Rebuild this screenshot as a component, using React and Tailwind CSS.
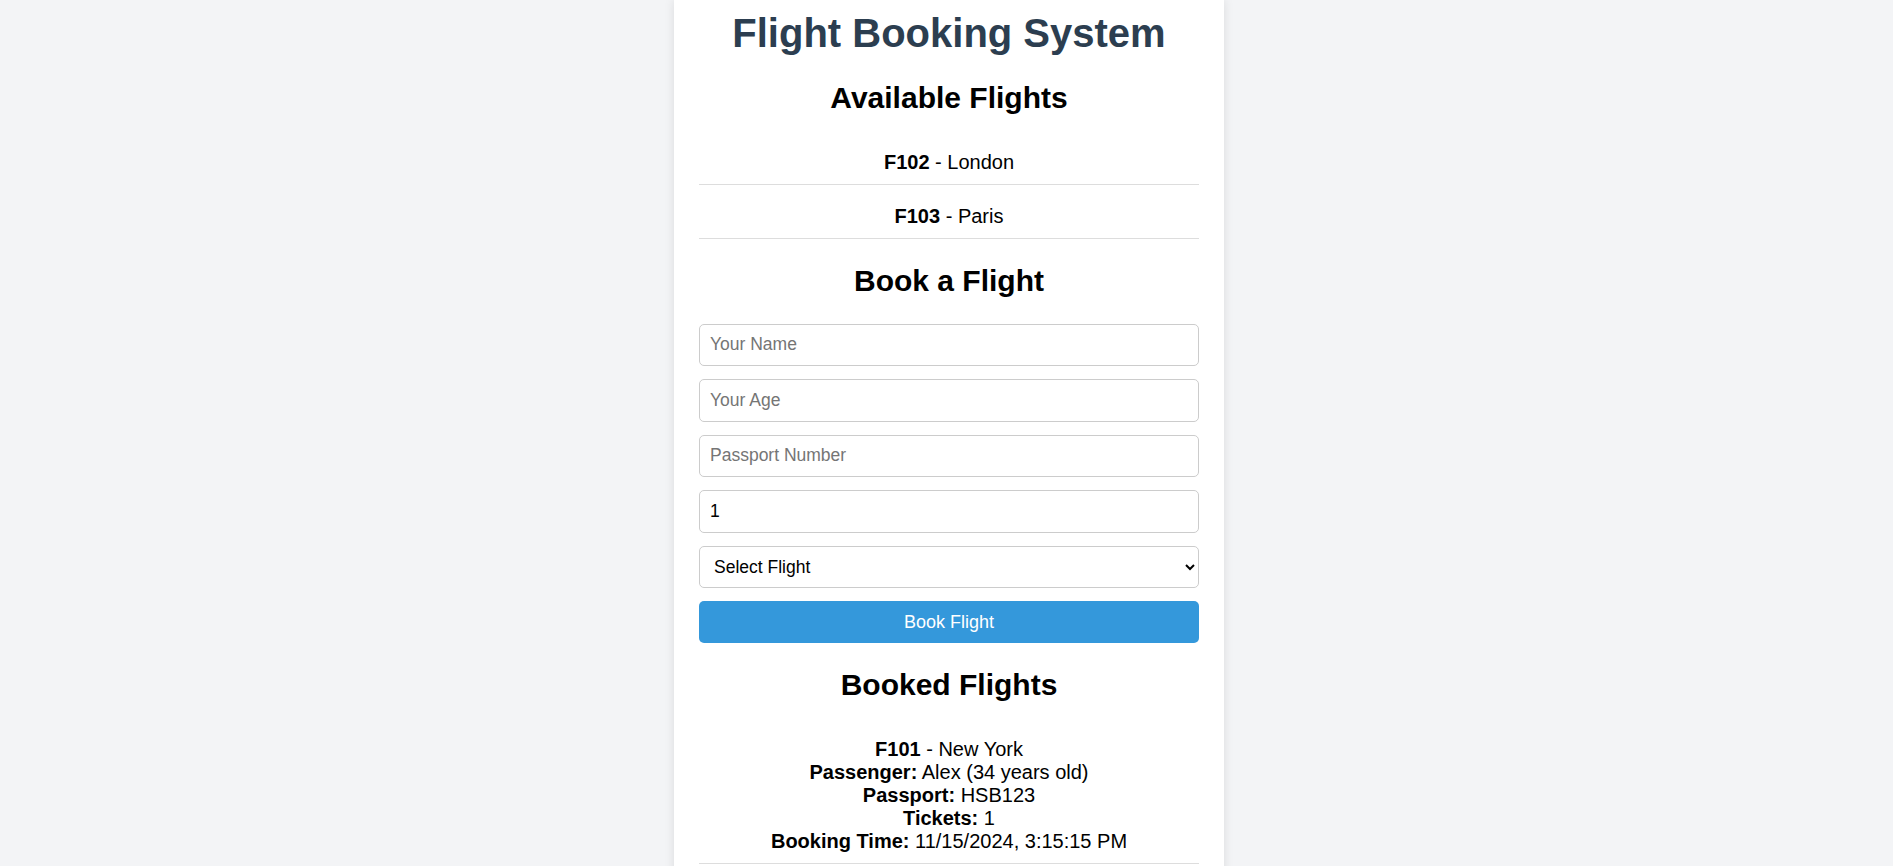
import React from "react";

const flights = [
  { id: "F102", dest: "London" },
  { id: "F103", dest: "Paris" },
];

export default function App() {
  const inputCls =
    "block w-full h-[42.5px] px-[10px] border border-[#ccc] rounded-[5px] bg-white text-[17.5px] text-black outline-none placeholder:text-[#757575]";
  return (
    <div className="min-h-screen bg-[#f3f4f6] pl-[5px] font-['Liberation_Sans',Arial,sans-serif] text-black">
      <div className="mx-auto w-[550px] bg-white px-[25px] pt-[10px] pb-[20px] shadow-[0_0_10px_rgba(0,0,0,0.1)]">
        <h1 className="text-center text-[40px] font-bold leading-[46px] text-[#2c3e50]">
          Flight Booking System
        </h1>
        <h2 className="mt-[25px] mb-[25px] text-center text-[30px] font-bold leading-[34.5px]">
          Available Flights
        </h2>
        <ul className="flex flex-col gap-[10px]">
          {flights.map((f) => (
            <li
              key={f.id}
              className="py-[10px] border-b border-[#ddd] text-center text-[20px] leading-[23px]"
            >
              <strong>{f.id}</strong> - {f.dest}
            </li>
          ))}
        </ul>
        <h2 className="mt-[25px] mb-[25.5px] text-center text-[30px] font-bold leading-[34.5px]">
          Book a Flight
        </h2>
        <form className="flex flex-col gap-[13px]" onSubmit={(e) => e.preventDefault()}>
          <input type="text" placeholder="Your Name" className={inputCls} />
          <input type="number" placeholder="Your Age" className={inputCls} />
          <input type="text" placeholder="Passport Number" className={inputCls} />
          <input type="number" defaultValue="1" className={inputCls} />
          <select className={inputCls} defaultValue="">
            <option value="">Select Flight</option>
            <option value="F102">F102 - London</option>
            <option value="F103">F103 - Paris</option>
          </select>
          <button
            type="submit"
            className="block w-full h-[42px] rounded-[5px] bg-[#3498db] text-[18px] text-white"
          >
            Book Flight
          </button>
        </form>
        <h2 className="mt-[25px] mb-[25px] text-center text-[30px] font-bold leading-[34.5px]">
          Booked Flights
        </h2>
        <ul className="flex flex-col gap-[10px]">
          <li className="py-[10px] border-b border-[#ddd] text-center text-[20px] leading-[23px]">
            <strong>F101</strong> - New York
            <br />
            <strong>Passenger:</strong> Alex (34 years old)
            <br />
            <strong>Passport:</strong> HSB123
            <br />
            <strong>Tickets:</strong> 1
            <br />
            <strong>Booking Time:</strong> 11/15/2024, 3:15:15 PM
          </li>
        </ul>
      </div>
    </div>
  );
}
